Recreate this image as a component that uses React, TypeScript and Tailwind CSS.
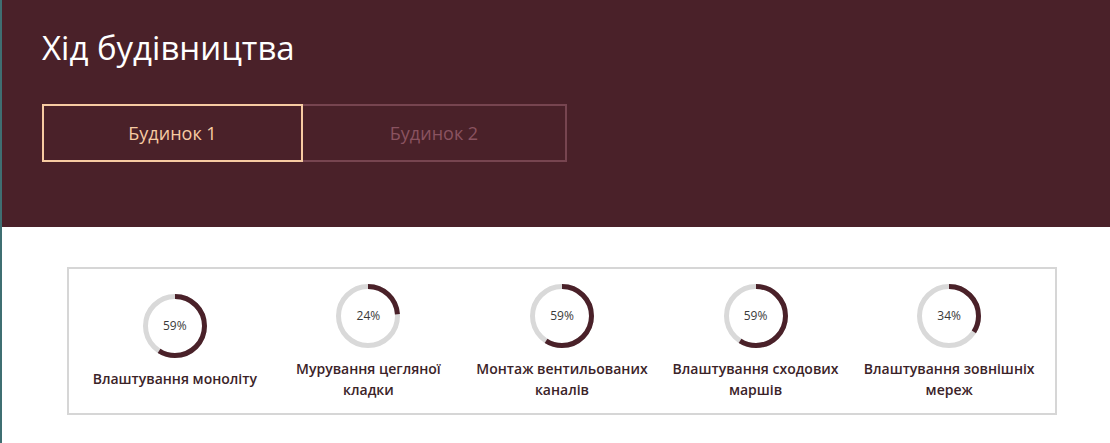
import React from 'react';

const stages = [
  { title: 'Влаштування моноліту', percent: 59 },
  { title: 'Мурування цегляної кладки', percent: 24 },
  { title: 'Монтаж вентильованих каналів', percent: 59 },
  { title: 'Влаштування сходових маршів', percent: 59 },
  { title: 'Влаштування зовнішніх мереж', percent: 34 },
];

function ProgressRing({ percent }: { percent: number }) {
  const r = 29.5;
  const c = 2 * Math.PI * r;
  return (
    <div className="relative h-[66px] w-[66px]">
      <svg width="66" height="66" viewBox="0 0 66 66" className="-rotate-90">
        <circle cx="33" cy="33" r={r} fill="none" stroke="#d9d9d9" strokeWidth="5" />
        <circle
          cx="33"
          cy="33"
          r={r}
          fill="none"
          stroke="#4a2129"
          strokeWidth="5"
          strokeDasharray={`${(c * percent) / 100} ${c}`}
        />
      </svg>
      <span className="absolute inset-0 flex items-center justify-center text-[12px] text-[#3a3a3a]">
        {percent}%
      </span>
    </div>
  );
}

export default function App() {
  return (
    <div className="h-[443px] w-[1110px] overflow-hidden border-l-2 border-[#3f6f72] bg-white font-['Open_Sans',sans-serif]">
      <div className="h-[227px] bg-[#4a2129] pl-[40px] pt-[28px]">
        <h2 className="text-[33px] leading-[40px] text-white">Хід будівництва</h2>
        <div className="mt-[36px] flex">
          <button className="h-[58px] w-[261px] border-2 border-[#f7cba2] text-[18px] text-[#f7cba2]">
            Будинок 1
          </button>
          <button className="h-[58px] w-[264px] border-2 border-l-0 border-[#774550] text-[18px] text-[#8a5360]">
            Будинок 2
          </button>
        </div>
      </div>

      <div className="pl-[65px] pt-[40px]">
        <div className="flex h-[148px] w-[990px] items-center border-2 border-[#d6d6d6] px-[9px]">
          {stages.map((s) => (
            <div key={s.title} className="flex w-[194px] flex-col items-center">
              <ProgressRing percent={s.percent} />
              <p className="mt-[9px] px-1 text-center text-[14px] leading-[21px] font-semibold text-[#3b2328]">
                {s.title}
              </p>
            </div>
          ))}
        </div>
      </div>
    </div>
  );
}
